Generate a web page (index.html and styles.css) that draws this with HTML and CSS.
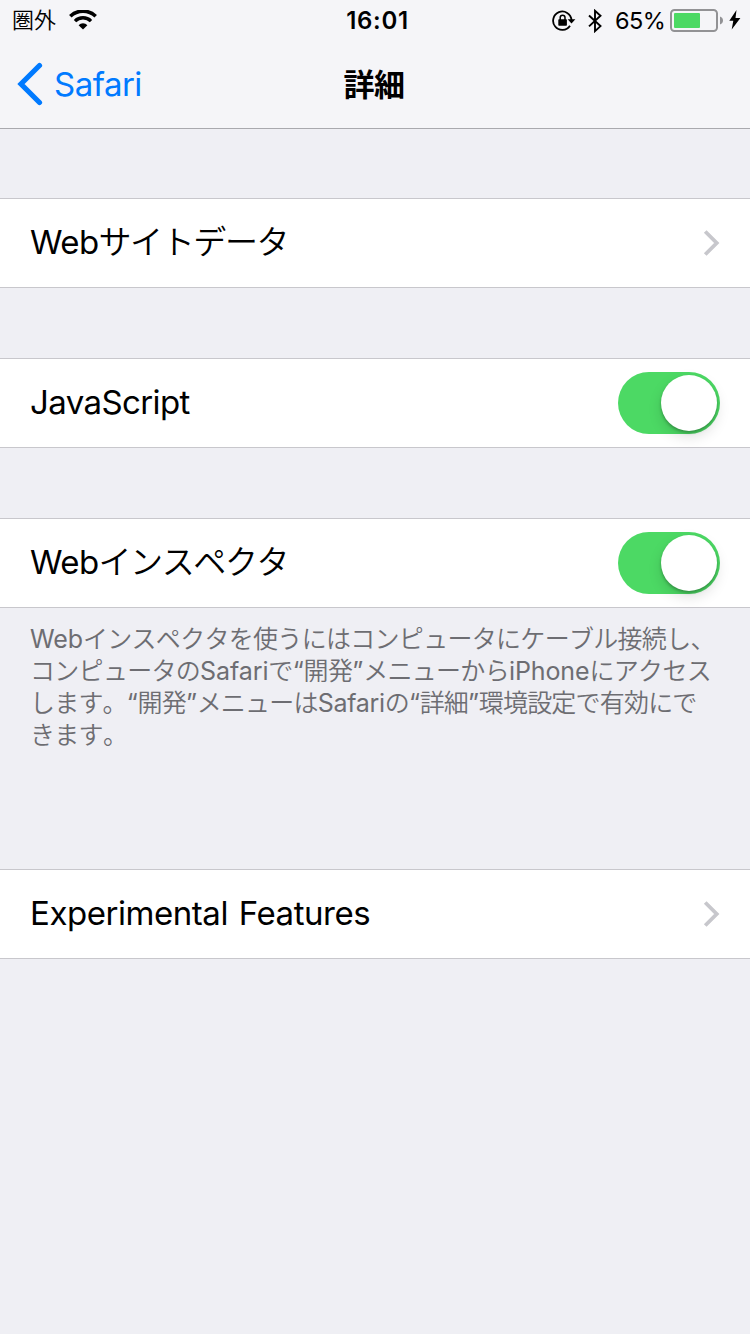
FILE: index.html
```html
<!DOCTYPE html>
<html lang="ja">
<head>
<meta charset="utf-8">
<title>詳細</title>
<link rel="stylesheet" href="styles.css">
</head>
<body>
<header class="header">
  <div class="status">
    <div class="status-left">
      <span class="carrier">圏外</span>
      <svg class="wifi" width="28" height="20" viewBox="0 0 28 20">
        <path d="M1.300 6.200a18.500 18.500 0 0 1 25.400 0" fill="none" stroke="#000" stroke-width="3.600"/>
        <path d="M6 11.100a11.400 11.400 0 0 1 16 0" fill="none" stroke="#000" stroke-width="3.400"/>
        <path d="M14 19.600l-4.400-4.400a6.200 6.200 0 0 1 8.800 0z"/>
      </svg>
    </div>
    <time class="clock">16:01</time>
    <div class="status-right">
      <svg class="lock" width="24" height="22" viewBox="0 0 24 22">
        <path d="M18 15.800a9.200 9.200 0 1 1 1.500-5.800" fill="none" stroke="#000" stroke-width="1.800"/>
        <path d="M15.600 9.200h7.800l-3.900 4.300z"/>
        <rect x="6.300" y="9.300" width="8.600" height="6.400" rx=".7"/>
        <path d="M8.200 10V7.600a2.400 2.400 0 0 1 4.800 0V10" fill="none" stroke="#000" stroke-width="1.500"/>
      </svg>
      <svg class="bluetooth" width="14" height="24" viewBox="0 0 14 24">
        <path d="M1 6.500l11.500 10.600-5.500 5V1.800l5.500 5L1 17.400" fill="none" stroke="#000" stroke-width="1.900"/>
      </svg>
      <span class="percent">65%</span>
      <svg class="battery" width="54" height="24" viewBox="0 0 54 24">
        <rect x="1" y="1" width="46" height="21" rx="3.500" fill="none" stroke="#929295" stroke-width="2"/>
        <rect x="4" y="4" width="26" height="15" rx="1" fill="#4cd964"/>
        <path d="M50 7.500q3 1.200 3 4t-3 4z" fill="#929295"/>
      </svg>
      <svg class="bolt" width="12" height="20" viewBox="0 0 12 20">
        <path d="M7.500 0L.3 10.800h4L2.700 19.500 11.400 7.900H6.500z"/>
      </svg>
    </div>
  </div>
  <nav class="nav">
    <a class="back">
      <svg class="back-icon" width="26" height="44" viewBox="0 0 26 44">
        <path d="M22.500 3.500L4 22l18.500 18.500" fill="none" stroke="#007aff" stroke-width="5.200" stroke-linecap="round" stroke-linejoin="miter"/>
      </svg>
      <span class="back-label">Safari</span>
    </a>
    <h1 class="title">詳細</h1>
  </nav>
</header>
<main class="settings">
  <section class="row">
    <span class="label"><span class="latin">Web</span>サイトデータ</span>
    <svg class="chevron" width="18" height="28" viewBox="0 0 18 28">
      <path d="M2.200 2.500L13.700 14 2.200 25.500" fill="none" stroke="#c7c7cc" stroke-width="3.800"/>
    </svg>
  </section>
  <section class="row">
    <span class="label"><span class="latin">JavaScript</span></span>
    <span class="switch"><span class="knob"></span></span>
  </section>
  <section class="row">
    <span class="label"><span class="latin">Web</span>インスペクタ</span>
    <span class="switch"><span class="knob"></span></span>
  </section>
  <p class="note">
    <span class="line"><span class="latin">Web</span>インスペクタを使うにはコンピュータにケーブル接続し、</span>
    <span class="line">コンピュータの<span class="latin">Safari</span>で<span class="latin">“</span>開発<span class="latin">”</span>メニューから<span class="latin">iPhone</span>にアクセス</span>
    <span class="line snug">します。<span class="latin">“</span>開発<span class="latin">”</span>メニューは<span class="latin">Safari</span>の<span class="latin">“</span>詳細<span class="latin">”</span>環境設定で有効にで</span>
    <span class="line">きます。</span>
  </p>
  <section class="row">
    <span class="label"><span class="latin wide">Experimental Features</span></span>
    <svg class="chevron" width="18" height="28" viewBox="0 0 18 28">
      <path d="M2.200 2.500L13.700 14 2.200 25.500" fill="none" stroke="#c7c7cc" stroke-width="3.800"/>
    </svg>
  </section>
</main>
</body>
</html>
```
FILE: styles.css
```css
* { box-sizing: border-box; }
body {
  margin: 0;
  min-height: 1334px;
  background: #efeff4;
  color: #000;
  font-family: Inter, "Noto Sans CJK JP", sans-serif;
}
svg { display: block; flex: none; }
.header {
  height: 129px;
  background: #f5f5f8;
  border-bottom: 1px solid #a9a9ae;
}
.status, .nav {
  display: grid;
  grid-template-columns: 1fr auto 1fr;
  align-items: center;
}
.status { height: 40px; }
.status-left { display: flex; align-items: center; padding-left: 12px; }
.carrier { font-size: 22px; line-height: 40px; font-weight: 350; width: 44px; }
.wifi { margin-left: 13px; }
.clock { height: 40px; font-size: 24px; font-weight: 600; line-height: 42px; letter-spacing: .7px; padding-left: 5px; }
.status-right { display: flex; align-items: center; justify-content: flex-end; height: 40px; padding-right: 9px; }
.lock { margin-top: 1px; }
.bluetooth { margin: 1px 0 0 12px; }
.percent { margin-left: 13px; width: 55px; height: 40px; font-size: 23.500px; line-height: 42px; letter-spacing: -.6px; }
.battery { margin-top: 1px; }
.bolt { margin-left: 5px; }
.nav { height: 88px; }
.back { grid-column: 1; display: flex; align-items: center; padding-left: 17px; }
.back-label { color: #007aff; font-size: 33px; letter-spacing: -.5px; margin-left: 11px; }
.title { margin: 0; padding: 2px 2px 0 0; font-size: 31px; font-weight: 700; line-height: 86px; letter-spacing: -.5px; }
.row {
  display: flex;
  align-items: center;
  justify-content: space-between;
  height: 90px;
  margin-top: 70px;
  padding: 0 30px;
  background: #fff;
  border: solid #c8c7cc;
  border-width: 1px 0;
}
.row:first-child { margin-top: 69px; }
.label {
  padding-bottom: 2px;
  font-size: 33px;
  font-weight: 350;
  font-kerning: none;
  line-height: 86px;
  letter-spacing: -1.400px;
  white-space: nowrap;
}
.latin { font-weight: 400; font-kerning: normal; letter-spacing: -.6px; }
.wide { letter-spacing: -.45px; word-spacing: 2px; }
.chevron { margin-right: -1px; }
.switch {
  display: flex;
  justify-content: flex-end;
  width: 102px;
  height: 62px;
  padding: 3px;
  border-radius: 31px;
  background: #4cd964;
}
.knob {
  width: 56px;
  height: 56px;
  border-radius: 50%;
  background: #fff;
  box-shadow: 0 6px 14px rgba(0, 0, 0, .13), 0 2px 3px rgba(0, 0, 0, .25);
}
.note {
  height: 176px;
  margin: 15px 0 0 30px;
  color: #6d6d72;
  font-size: 25px;
  font-weight: 350;
  font-kerning: none;
  letter-spacing: -.7px;
  white-space: nowrap;
}
.line { display: block; height: 32px; line-height: 32px; }
.line .latin { letter-spacing: -.1px; }
.snug { letter-spacing: -.8px; }
.snug .latin { letter-spacing: -.3px; }
```
